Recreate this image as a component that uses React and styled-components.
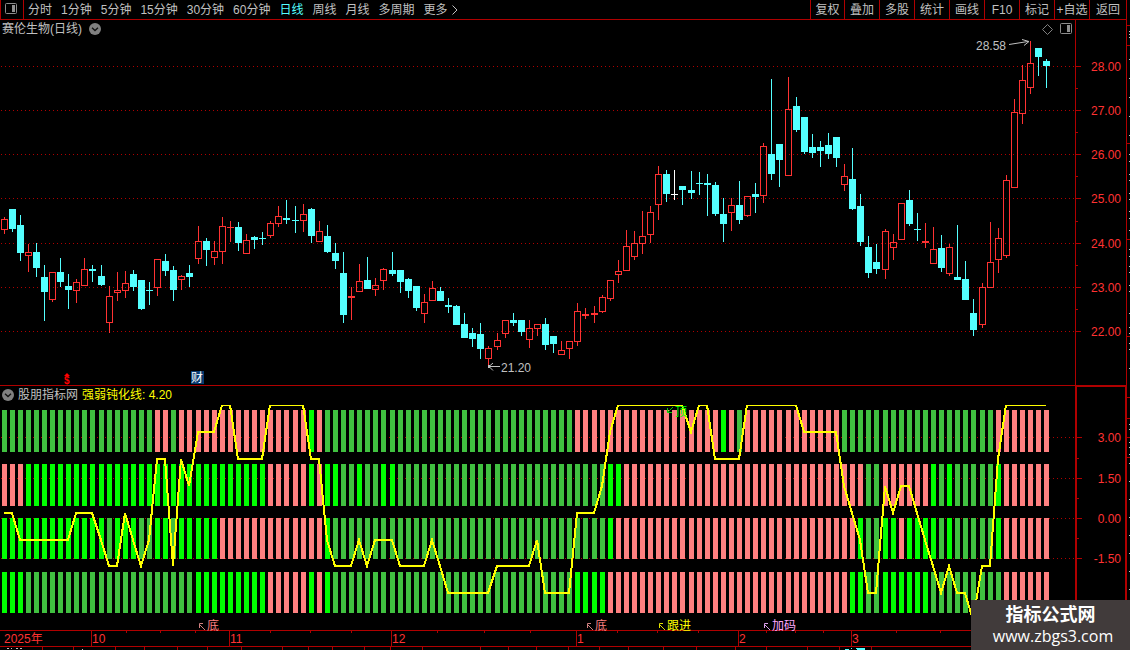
import React from "react";
import styled, { createGlobalStyle } from "styled-components";

const RED = "#b00000";
const LABEL_RED = "#ff3232";
const UP = "#ff3232";
const DOWN = "#54ffff";
const GREY = "#c0c0c0";

const GlobalStyle = createGlobalStyle`
  * { box-sizing: border-box; }
  body {
    margin: 0;
    background: #000;
    color: ${GREY};
    font: 12px/16px "Liberation Sans", "Noto Sans CJK SC", sans-serif;
    overflow: hidden;
  }
`;

const Page = styled.div`
  display: flex;
  min-height: 100vh;
  position: relative;
`;

const Main = styled.main`
  flex: 1;
  min-width: 0;
  display: flex;
  flex-direction: column;
`;

const Toolbar = styled.header`
  display: flex;
  height: 20px;
  border-bottom: 1px solid ${RED};
  overflow: hidden;
`;

const IconCell = styled.button`
  width: 24px;
  padding: 0 2px 2px 0;
  border: 1px solid ${RED};
  border-width: 0 1px;
  background: none;
  display: flex;
  align-items: center;
  justify-content: center;
`;

const Periods = styled.nav`
  flex: 1;
  display: flex;
  align-items: center;
  gap: 9px;
  padding-left: 4px;
`;

const Period = styled.button`
  padding: 0;
  border: 0;
  background: none;
  font: inherit;
  white-space: nowrap;
  display: flex;
  align-items: center;
  gap: 4px;
  color: ${(p) => (p.$active ? DOWN : GREY)};
`;

const Tools = styled.div`
  display: flex;
`;

const Tool = styled.button`
  width: 35px;
  padding: 0;
  border: 0;
  border-left: 1px solid ${RED};
  background: none;
  font: inherit;
  color: ${GREY};
  white-space: nowrap;
  &:first-child { width: 34px; }
  &:last-child { width: 37px; }
`;

const Panel = styled.section`
  position: relative;
  display: flex;
  height: ${(p) => p.$height}px;
  border-top: ${(p) => (p.$ruled ? `1px solid ${RED}` : "0")};
`;

const PanelTitle = styled.h2`
  position: absolute;
  top: 1px;
  left: 2px;
  margin: 0;
  font: inherit;
  display: flex;
  align-items: center;
  gap: ${(p) => (p.$ruled ? 4 : 7)}px;
`;

const PanelTools = styled.div`
  position: absolute;
  top: 3px;
  right: 54px;
  display: flex;
  align-items: center;
  gap: 7px;
`;

const GhostButton = styled.button`
  padding: 0;
  border: 0;
  background: none;
  display: flex;
`;

const Yellow = styled.span`
  color: #ffff00;
`;

const Plot = styled.svg`
  flex: 1;
  min-width: 0;
  height: 100%;
  display: block;
  overflow: visible;
`;

const PriceAxis = styled.svg`
  width: 51px;
  height: 100%;
  display: block;
  border-left: 1px solid ${RED};
`;

const SelectedAxis = styled.div`
  width: 51px;
  margin-top: -1px;
  border: 2px solid ${RED};
  border-bottom: 0;
  border-right-width: 1px;
  svg { display: block; width: 100%; height: 100%; }
`;

const TimeAxis = styled.svg`
  display: block;
  width: 100%;
  height: 16px;
  border-top: 1px solid ${RED};
`;

const TabStrip = styled.footer`
  flex: 1;
  min-height: 4px;
  display: flex;
  border-top: 1px solid ${RED};
`;

const TabCell = styled.div`
  flex: 0 0 ${(p) => p.$w}px;
  border-right: 1px solid ${RED};
  svg { display: block; width: 100%; height: 3px; }
`;

const Edge = styled.aside`
  width: 4px;
  border-left: 1px solid ${RED};
  svg { display: block; width: 100%; height: 100%; }
`;

const Watermark = styled.div`
  position: absolute;
  right: 0;
  bottom: 0;
  width: 159px;
  height: 50px;
  padding-top: 4px;
  background: #413b3b;
  color: #fff;
  text-align: center;
`;

const WatermarkName = styled.div`
  font: bold 18px/22px "Liberation Sans", "Noto Sans CJK SC", sans-serif;
`;

const WatermarkLink = styled.a`
  display: block;
  font: 16px/20px "Open Sans", sans-serif;
  color: #fff;
  text-decoration: none;
  padding-left: 5px;
`;

const periods = ["分时", "1分钟", "5分钟", "15分钟", "30分钟", "60分钟", "日线", "周线", "月线", "多周期"];
const tools = ["复权", "叠加", "多股", "统计", "画线", "F10", "标记", "+自选", "返回"];

/* kind, high, body top, body bottom, low */
const candles = `
R 217 219 230 234|C 209 209 229 232|C 215 225 253 261|R 244 252 256 272|C 243 252 268 277
C 265 277 292 321|R 272 272 300 302|C 258 272 282 287|C 274 286 290 309|R 279 282 291 303
R 258 269 286 286|C 265 269 271 282|C 265 276 285 286|R 286 296 323 333|R 272 290 293 301
R 271 283 291 298|C 270 274 287 291|C 280 280 309 310|C 282 290 291 305|R 259 259 288 296
C 254 261 271 276|C 266 270 290 301|R 275 276 280 290|C 265 273 277 287|R 226 241 259 264
C 238 241 250 266|R 241 251 258 265|R 217 226 252 264|R 221 227 228 242|C 222 227 243 251
R 234 240 254 254|C 236 237 240 249|C 232 238 239 245|R 221 223 236 238|R 206 216 224 227
C 200 218 220 224|C 206 220 221 233|R 204 214 221 232|C 208 209 236 243|R 221 231 242 242
C 225 236 252 253|C 243 253 261 269|C 252 273 315 323|R 287 296 298 320|R 264 281 292 292
C 257 280 289 289|R 278 285 290 296|R 268 269 281 290|C 252 270 274 276|C 270 270 282 293
C 278 279 291 298|C 286 286 308 311|R 294 302 314 323|R 281 288 301 301|C 287 291 301 301
C 298 305 307 313|C 305 306 325 325|C 313 324 338 338|C 328 333 339 347|C 323 334 349 359
R 346 348 359 365|R 333 340 347 350|R 320 320 334 338|C 313 320 323 326|C 320 320 332 336
R 320 328 340 348|R 324 324 329 336|C 318 324 345 350|C 336 336 344 353|R 341 350 355 355
R 341 341 349 359|R 303 311 342 346|R 308 314 316 319|R 306 313 315 323|R 295 297 312 313
R 280 280 299 301|R 260 271 275 283|R 230 246 271 271|R 231 243 257 260|R 211 236 244 254
R 206 212 235 243|R 166 174 205 220|C 170 174 194 202|W 170 194 195 200|C 186 186 190 205
C 171 190 193 199|C 172 183 184 195|C 174 183 185 216|C 182 185 214 216|C 198 214 224 242
R 198 205 213 231|C 181 205 220 224|R 196 196 216 217|C 183 194 197 213|R 143 146 196 203
C 79 154 174 180|C 144 144 160 187|R 77 109 176 176|C 97 106 130 132|C 117 117 152 154
C 134 147 153 158|C 141 147 151 167|C 133 145 154 159|C 137 137 158 167|R 164 176 185 191
C 148 179 209 210|C 194 206 242 246|C 236 247 273 278|C 244 262 269 274|R 229 231 270 279
R 234 242 248 260|R 203 203 240 240|C 190 200 224 226|C 213 229 230 241|R 223 241 243 248
R 227 249 264 264|C 235 248 268 272|R 244 247 274 276|C 225 277 280 280|C 261 279 300 300
C 299 313 330 336|R 283 287 325 328|R 222 262 288 288|R 228 238 260 273|R 175 180 256 258
R 99 112 188 188|R 65 80 114 124|R 41 63 88 94|C 48 48 57 76|C 59 61 66 88`
  .trim()
  .split(/[\n|]/)
  .map((row) => {
    const [kind, ...v] = row.split(" ");
    return [kind, ...v.map(Number)];
  });

const xAt = (i) => Math.floor(4.045 + i * 8.0825);

/* run-length rows: D weak green, G strong green, P pink */
const strength = [
  { top: 410, bottom: 452, runs: "D19 P2 D1 P16 G1 P1 D31 P18 G1 P1 D1 P12 D19 P7" },
  { top: 464, bottom: 506, runs: "P3 G30 P5 G1 P1 G2 D2 G1 D2 G2 D26 G2 P30 D2 P6 G1 D1 G1 D5 G1 P6" },
  { top: 518, bottom: 559, runs: "G13 D1 G3 D2 G2 D1 G5 P13 G1 D34 G1 P30 G1 D2 G2 P1 G4 D1 G1 D5 G1 P6" },
  { top: 572, bottom: 613, runs: "G3 D21 G9 P5 G1 P1 G1 D30 G4 P30 G2 D2 G6 D9 P6" },
];
const barColor = { D: "#40c040", G: "#00ff00", P: "#ff8080" };
const expand = (runs) =>
  runs.split(" ").flatMap((r) => Array(Number(r.slice(1))).fill(r[0]));

/* line level per bar; each step down is 1.00 from 4.20 */
const lineLevels = [
  4, 4, 5, 5, 5, 5, 5, 5, 5, 4, 4, 4, 5, 6, 6, 4, 5, 6, 5, 2, 2, 6, 2, 3, 1, 1, 1, 0, 0, 2, 2, 2, 2,
  0, 0, 0, 0, 0, 2, 2, 5, 6, 6, 6, 5, 6, 5, 5, 5, 6, 6, 6, 6, 5, 6, 7, 7, 7, 7, 7, 7, 6, 6, 6, 6, 6,
  5, 7, 7, 7, 7, 4, 4, 4, 3, 1, 0, 0, 0, 0, 0, 0, 0, 0, 0, 1, 0, 0, 2, 2, 2, 2, 0, 0, 0, 0, 0, 0, 0,
  1, 1, 1, 1, 1, 3, 4, 5, 7, 7, 3, 4, 3, 3, 4, 5, 6, 7, 6, 7, 7, 8, 6, 6, 2, 0, 0, 0, 0, 0, 0,
];
const levelY = [405, 432, 459, 486, 513, 540, 566, 593, 620];

const priceTicks = [[66, "28.00"], [110, "27.00"], [154, "26.00"], [198, "25.00"], [243, "24.00"], [287, "23.00"], [331, "22.00"]];
const priceMinor = [88, 132, 176, 221, 265, 309];
const valueTicks = [[437, "3.00"], [478, "1.50"], [518, "0.00"], [558, "-1.50"]];
const valueMinor = [458, 498, 538];
const months = [[91, "10"], [229, "11"], [391, "12"], [576, "1"], [738, "2"], [851, "3"]];
const weekTicks = [126, 160, 195, 270, 310, 351, 437, 484, 530, 617, 657, 698, 766, 795, 823, 896, 940];
const tabWidths = [43, 31, 42, 29, 33, 30, 34, 41, 26, 24, 32, 26, 32, 58, 28, 28, 32, 31, 29, 35, 33, 39, 31, 41, 32, 32];
/* glyph tops that rise into the strip, by tab: [x, width, y, colour] */
const tabMarks = {
  0: [[7, 2, 1, GREY], [11, 1, 1, GREY], [16, 2, 1, GREY], [20, 2, 1, GREY]],
  2: [[8, 1, 2, GREY]],
  25: [[5, 4, 2, DOWN], [11, 1, 1, DOWN], [16, 9, 1, DOWN], [17, 8, 2, DOWN]],
};

function PanelIcon() {
  return (
    <svg width="12" height="12" viewBox="0 0 12 12" aria-hidden="true">
      <rect x="0.5" y="0.5" width="11" height="10" rx="1" fill="none" stroke="#8c8c8c" />
      <rect x="7" y="2" width="3" height="7" fill="#909090" />
    </svg>
  );
}

function Diamond() {
  return (
    <svg width="11" height="11" viewBox="0 0 11 11" aria-hidden="true">
      <path d="M5.5 0.5 L10.5 5.5 L5.5 10.5 L0.5 5.5 Z" fill="none" stroke="#808080" />
    </svg>
  );
}

function RoundChevron() {
  return (
    <svg width="12" height="12" viewBox="0 0 12 12" aria-hidden="true">
      <circle cx="6" cy="6" r="6" fill="#808080" />
      <path d="M3 4.8 L6 7.6 L9 4.8" fill="none" stroke="#111" strokeWidth="1.3" />
    </svg>
  );
}

function GridLines({ ys }) {
  return ys.map((y) => (
    <line key={y} x1="1" x2="100%" y1={y + 0.5} y2={y + 0.5} stroke="#b00000" strokeDasharray="1 3" shapeRendering="crispEdges" />
  ));
}

function Candle({ x, data: [kind, high, top, bottom, low] }) {
  const color = kind === "R" ? UP : kind === "W" ? "#fff" : DOWN;
  const hollow = kind === "R" && bottom - top > 2;
  return (
    <g shapeRendering="crispEdges" fill={color}>
      {top > high && <rect x={x} y={high} width="1" height={top - high} />}
      {low > bottom && <rect x={x} y={bottom} width="1" height={low - bottom} />}
      {hollow ? (
        <rect x={x - 2.5} y={top + 0.5} width="6" height={bottom - top - 1} fill="none" stroke={color} />
      ) : (
        <rect x={x - 3} y={top} width="7" height={Math.max(1, bottom - top)} />
      )}
    </g>
  );
}

function Signal({ x, label, color, arrow }) {
  return (
    <g>
      <path d={`M${x + 7} 630 L${x + 1} 624 M${x + 1.5} 628 V623.5 H${x + 5}`} fill="none" stroke={arrow} strokeWidth="1" />
      <text x={x + 9} y="630" fill={color}>{label}</text>
    </g>
  );
}

function PricePlot() {
  return (
    <Plot fontSize="12">
      <g transform="translate(0 -20)">
        <GridLines ys={priceTicks.map((t) => t[0])} />
        {candles.map((c, i) => (
          <Candle key={i} x={xAt(i)} data={c} />
        ))}
        <g fill="none" stroke={GREY}>
          <path d="M1009 44.5 L1028 41.5 M1022 39.5 L1029 41.5 L1024 45.5" />
          <path d="M489 366.5 H500 M493 363 L489 366.5 L493 370.5" />
          <rect x="488.5" y="365.5" width="1" height="2" />
        </g>
        <text x="976" y="50" fill={GREY}>28.58</text>
        <text x="501" y="372" fill={GREY}>21.20</text>
        <path d="M67 373 L70 376 H64 Z" fill="#ff0000" />
        <text x="64" y="384" fontSize="10" fontWeight="bold" fill="#ff0000">$</text>
        <rect x="191" y="371" width="13" height="13" fill="#083a70" />
        <text x="191" y="382" fill="#fff">财</text>
      </g>
    </Plot>
  );
}

function StrengthPlot() {
  const points = lineLevels.map((l, i) => `${xAt(i)},${levelY[l]}`).join(" ");
  return (
    <Plot fontSize="12">
      <clipPath id="line-area">
        <rect x="0" y="405" width="100%" height="210" />
      </clipPath>
      <g transform="translate(0 -386)">
        <GridLines ys={valueTicks.map((t) => t[0])} />
        {strength.map(({ top, bottom, runs }) =>
          expand(runs).map((kind, i) => (
            <rect key={`${top}-${i}`} x={xAt(i) - 2} y={top} width="5" height={bottom - top} fill={barColor[kind]} />
          ))
        )}
        <g clipPath="url(#line-area)">
          <polyline points={points} fill="none" stroke="#ffff00" strokeWidth="2" shapeRendering="crispEdges" />
        </g>
        <path d="M673 407 L668 412 M667.5 408 V412.5 H672" fill="none" stroke="#00d000" />
        <text x="675" y="416" fill="#00ff00">顶</text>
        <Signal x={198} label="底" color="#ff8080" arrow="#d08080" />
        <Signal x={586} label="底" color="#ff8080" arrow="#d08080" />
        <Signal x={658} label="跟进" color="#ffff00" arrow="#e0e000" />
        <Signal x={763} label="加码" color="#ffa8ff" arrow="#d8a0e8" />
      </g>
    </Plot>
  );
}

function AxisMarks({ ticks, minor, right, shift }) {
  return (
    <g transform={`translate(0 ${-shift})`}>
      {ticks.map(([y, label]) => (
        <g key={y}>
          <rect x="0" y={y} width="5" height="1" fill={RED} />
          <text x={right} y={y + 5} textAnchor="end" fill={LABEL_RED}>{label}</text>
        </g>
      ))}
      {minor.map((y) => (
        <rect key={y} x="0" y={y} width="2" height="1" fill={RED} />
      ))}
    </g>
  );
}

export default function App() {
  return (
    <>
      <GlobalStyle />
      <Page>
        <Main>
          <Toolbar>
            <IconCell aria-label="侧栏"><PanelIcon /></IconCell>
            <Periods>
              {periods.map((p) => (
                <Period key={p} $active={p === "日线"}>{p}</Period>
              ))}
              <Period>
                更多
                <svg width="6" height="10" viewBox="0 0 6 10" aria-hidden="true">
                  <path d="M0.5 0.5 L5 5 L0.5 9.5" fill="none" stroke={GREY} />
                </svg>
              </Period>
            </Periods>
            <Tools>
              {tools.map((t) => (
                <Tool key={t}>{t}</Tool>
              ))}
            </Tools>
          </Toolbar>

          <Panel $height={365}>
            <PricePlot />
            <PriceAxis>
              <AxisMarks ticks={priceTicks} minor={priceMinor} right={45} shift={20} />
            </PriceAxis>
            <PanelTitle>
              赛伦生物(日线)
              <GhostButton aria-label="展开"><RoundChevron /></GhostButton>
            </PanelTitle>
            <PanelTools>
              <GhostButton aria-label="标注"><Diamond /></GhostButton>
              <GhostButton aria-label="面板"><PanelIcon /></GhostButton>
            </PanelTools>
          </Panel>

          <Panel $height={245} $ruled>
            <StrengthPlot />
            <SelectedAxis>
              <svg>
                <AxisMarks ticks={valueTicks} minor={valueMinor} right={44} shift={387} />
              </svg>
            </SelectedAxis>
            <PanelTitle $ruled>
              <GhostButton aria-label="展开指标"><RoundChevron /></GhostButton>
              <span>股朋指标网</span>
              <Yellow>强弱钝化线: 4.20</Yellow>
            </PanelTitle>
          </Panel>

          <TimeAxis>
            <text x="4" y="12" fill={LABEL_RED}>2025年</text>
            {months.map(([x, label]) => (
              <g key={x}>
                <rect x={x} y="0" width="1" height="15" fill={RED} />
                <text x={x + 1} y="12" fill={LABEL_RED}>{label}</text>
              </g>
            ))}
            {weekTicks.map((x) => (
              <rect key={x} x={x} y="0" width="1" height="2" fill={RED} />
            ))}
          </TimeAxis>

          <TabStrip>
            {tabWidths.map((w, i) => (
              <TabCell key={i} $w={w}>
                {tabMarks[i] && (
                  <svg aria-hidden="true">
                    {tabMarks[i].map(([x, width, y, fill]) => (
                      <rect key={`${x}-${y}`} x={x} y={y} width={width} height="1" fill={fill} />
                    ))}
                  </svg>
                )}
              </TabCell>
            ))}
          </TabStrip>
        </Main>

        <Edge>
          <svg>
            {[25, 45, 143, 239, 336, 397, 418, 437, 457].map((y) => (
              <rect key={y} x="0" y={y} width="3" height="1" fill={RED} />
            ))}
            {[31, 34, 37, 59, 78, 97, 116, 135, 154, 161, 174, 180, 193, 199, 211, 218, 230, 249, 256, 266, 272, 285, 291, 313, 327, 333, 343, 349, 368, 424, 429, 442, 447, 454, 463, 481, 499, 517, 535, 553, 571, 589].map((y) => (
              <rect key={y} x="2" y={y} width="1" height="1" fill={GREY} />
            ))}
          </svg>
        </Edge>

        <Watermark>
          <WatermarkName>指标公式网</WatermarkName>
          <WatermarkLink href="#">www.zbgs3.com</WatermarkLink>
        </Watermark>
      </Page>
    </>
  );
}
